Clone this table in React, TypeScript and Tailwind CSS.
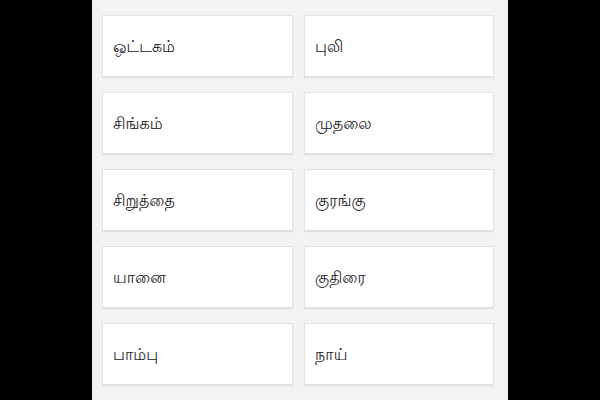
import React from "react";

const items = [
  "ஒட்டகம்",
  "புலி",
  "சிங்கம்",
  "முதலை",
  "சிறுத்தை",
  "குரங்கு",
  "யானை",
  "குதிரை",
  "பாம்பு",
  "நாய்",
];

export default function App() {
  return (
    <div className="w-[600px] h-[400px] bg-black flex overflow-hidden">
      <div className="ml-[92px] w-[416px] h-[400px] bg-[#f3f3f3] pl-[10px] pt-[15px]">
        <div className="grid grid-cols-[191px_190px] gap-x-[11px] gap-y-[15px]">
          {items.map((t) => (
            <div
              key={t}
              className="h-[62px] bg-white border border-[#e2e2e2] shadow-[0_1px_1px_rgba(0,0,0,0.08)] flex items-center pl-[10px] pt-[3px] text-[16px] text-[#222] font-['Lohit_Tamil',sans-serif]"
            >
              {t}
            </div>
          ))}
        </div>
      </div>
    </div>
  );
}
